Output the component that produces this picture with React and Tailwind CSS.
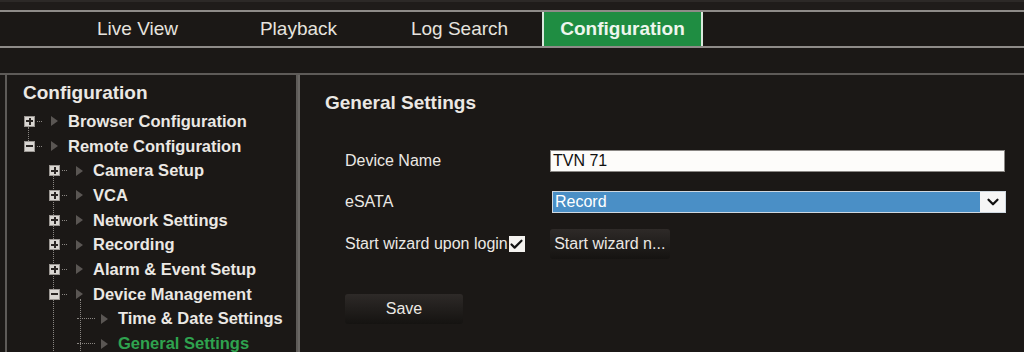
import { Check, ChevronDown } from "lucide-react";

const tabs = ["Live View", "Playback", "Log Search", "Configuration"];

const tree = [
  { label: "Browser Configuration", level: 0, icon: "plus" },
  { label: "Remote Configuration", level: 0, icon: "minus" },
  { label: "Camera Setup", level: 1, icon: "plus" },
  { label: "VCA", level: 1, icon: "plus" },
  { label: "Network Settings", level: 1, icon: "plus" },
  { label: "Recording", level: 1, icon: "plus" },
  { label: "Alarm & Event Setup", level: 1, icon: "plus" },
  { label: "Device Management", level: 1, icon: "minus" },
  { label: "Time & Date Settings", level: 2 },
  { label: "General Settings", level: 2, active: true },
];

// small expand / collapse box of the tree
const ToggleBox = ({ type }) => (
  <div className="w-[11px] h-[11px] bg-[#d9d6d2] border border-[#9a9692] flex items-center justify-center relative">
    <div className="w-[7px] h-[2px] bg-[#2a2624]" />
    {type === "plus" && <div className="absolute w-[2px] h-[7px] bg-[#2a2624]" />}
  </div>
);

const Arrow = () => (
  <svg width="7" height="10" viewBox="0 0 7 10">
    <path d="M0 0 L7 5 L0 10 Z" fill="#5a5653" />
  </svg>
);

const TreeRow = ({ item }) => {
  const indent = item.level === 0 ? "pl-[17px]" : item.level === 1 ? "pl-[42px]" : "pl-[70px]";
  return (
    <div className={`h-[24.7px] flex items-center ${indent}`}>
      {item.level < 2 ? (
        <>
          <ToggleBox type={item.icon} />
          <div className="w-[5px] border-t border-dotted border-[#8a8682] ml-[2px]" />
          <div className="ml-[9px]"><Arrow /></div>
          <span className="ml-[10px] font-bold text-[16.5px] text-[#ebe8e4]">{item.label}</span>
        </>
      ) : (
        <>
          <div className="w-[18px] border-t border-dotted border-[#8a8682]" />
          <div className="ml-[6px]"><Arrow /></div>
          <span className="ml-[10px] font-bold text-[16.5px] text-[#ebe8e4]">
            <span className={item.active ? "text-[#2fa34f]" : ""}>{item.label}</span>
          </span>
        </>
      )}
    </div>
  );
};

const DarkButton = ({ children, className }) => (
  <button className={`h-[30px] rounded-[3px] bg-gradient-to-b from-[#2e2a28] to-[#151311] text-[#ebe8e4] text-[16px] ${className}`}>
    {children}
  </button>
);

const App = () => {
  return (
    <div className="w-[1024px] h-[352px] overflow-hidden bg-[#1b1816] text-[#ebe8e4]" style={{ fontFamily: '"Liberation Sans", Arial, sans-serif' }}>
      {/* top strip */}
      <div className="h-[10px] bg-[#1f1c1a] border-t-[2px] border-[#2c2927]" />
      {/* nav bar */}
      <div className="h-[38px] border-t-[2px] border-b-[2px] border-[#8e8b88] flex pl-[57px]">
        {tabs.map((t) => (
          t === "Configuration" ? (
            <div key={t} className="w-[161px] ml-[2px] bg-[#1f8d42] border-x-[2px] border-[#d8e8dc] flex items-center justify-center font-bold text-[19px] text-[#eef6ee]">
              {t}
            </div>
          ) : (
            <div key={t} className="w-[161px] flex items-center justify-center text-[19px] text-[#e6e3df]">
              {t}
            </div>
          )
        ))}
      </div>

      {/* body */}
      <div className="mt-[25px] border-t-[2px] border-[#5e5b58] flex h-[300px]">
        <div className="ml-[5px] w-[293px] border-l-[2px] border-r-[2px] border-[#5e5b58] pt-[6px]">
          <div className="pl-[16px] font-bold text-[19px] h-[24px] leading-[24px]">Configuration</div>
          <div className="relative mt-[4px]">
            {/* vertical dotted connectors */}
            <div className="absolute left-[21px] top-[18px] h-[14px] border-l border-dotted border-[#8a8682]" />
            <div className="absolute left-[46px] top-[62px] h-[180px] border-l border-dotted border-[#8a8682]" />
            <div className="absolute left-[73px] top-[190px] h-[60px] border-l border-dotted border-[#8a8682]" />
            {tree.map((item) => (
              <TreeRow key={item.label} item={item} />
            ))}
          </div>
        </div>

        <div className="border-l-[2px] border-[#6a6764] flex-1 pl-[25px] pt-[17px]">
          <div className="font-bold text-[19px] h-[22px] leading-[22px]">General Settings</div>

          <div className="mt-[36px] pl-[20px] flex items-center h-[22px]">
            <span className="w-[205px] text-[16px]">Device Name</span>
            <div className="w-[455px] h-[22px] bg-[#fdfcfa] border border-[#8a8784] text-[#111] text-[16px] leading-[20px] pl-[2px]">
              TVN 71
            </div>
          </div>

          <div className="mt-[19px] pl-[20px] flex items-center h-[22px]">
            <span className="w-[207px] text-[16px]">eSATA</span>
            <div className="w-[454px] h-[22px] bg-[#4a8fc6] border border-[#cfd8e0] flex">
              <span className="flex-1 text-white text-[16px] leading-[20px] pl-[2px]">Record</span>
              <div className="w-[25px] bg-[#f6f6f6] flex items-center justify-center">
                <ChevronDown size={18} strokeWidth={3} color="#111" />
              </div>
            </div>
          </div>

          <div className="mt-[16px] pl-[20px] flex items-center h-[30px]">
            <span className="text-[16px]">Start wizard upon login</span>
            <div className="w-[16px] h-[16px] bg-[#f4f2ef] flex items-center justify-center ml-[1px]">
              <Check size={15} strokeWidth={3.5} color="#111" />
            </div>
            <DarkButton className="ml-[25px] w-[120px]">Start wizard n...</DarkButton>
          </div>

          <div className="mt-[35px] pl-[20px]">
            <DarkButton className="w-[118px]">Save</DarkButton>
          </div>
        </div>
      </div>
    </div>
  );
};

export default App;
